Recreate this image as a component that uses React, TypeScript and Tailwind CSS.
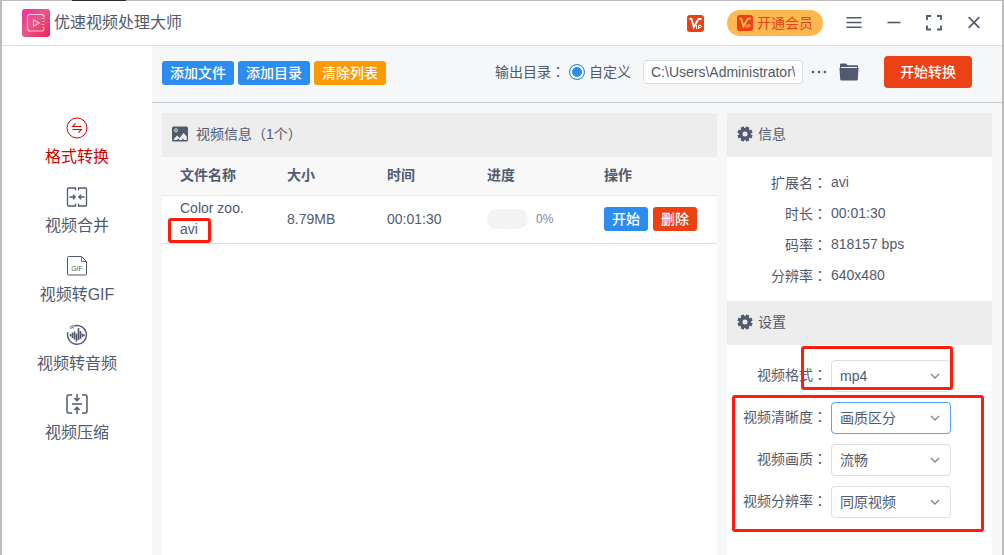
import { useState } from "react";
import { twJoin } from "tailwind-merge";

type IconProps = { className?: string };

const ConvertIcon = ({ className }: IconProps) => (
  <svg viewBox="0 0 22 22" fill="none" stroke="currentColor" className={className}>
    <circle cx="11" cy="11" r="10" strokeWidth="1" />
    <path d="M9.5 6.3 6.7 9.5H15.5M6.5 12.5H15.3L12.5 15.7" strokeWidth="1.1" />
  </svg>
);

const MergeIcon = ({ className }: IconProps) => (
  <svg viewBox="0 0 22 22" fill="none" stroke="currentColor" strokeWidth="1.3" className={className}>
    <path d="M9.5 4.5V2H2.5Q1.5 2 1.5 3V19Q1.5 20 2.5 20H9.5V17.5" />
    <path d="M12.5 4.5V2H19.5Q20.5 2 20.5 3V19Q20.5 20 19.5 20H12.5V17.5" />
    <path d="M3.5 11H9M7 8.8 9.2 11 7 13.2M18.5 11H13M15 8.8 12.8 11 15 13.2" />
  </svg>
);

const GifIcon = ({ className }: IconProps) => (
  <svg viewBox="0 0 22 22" fill="none" stroke="currentColor" className={className}>
    <path d="M15.5 1.5H2.5Q1.5 1.5 1.5 2.5V19Q1.5 20 2.5 20H19.5Q20.5 20 20.5 19V6.5Z" />
    <path d="M15.5 1.5V6.5H20.5M16 2 20 6" strokeWidth="0.9" />
    <text
      x="11"
      y="15.5"
      textAnchor="middle"
      fontSize="7"
      fontFamily="Liberation Sans, sans-serif"
      fill="currentColor"
      stroke="none"
    >
      GIF
    </text>
  </svg>
);

const AudioIcon = ({ className }: IconProps) => (
  <svg viewBox="0 0 22 22" fill="none" stroke="currentColor" className={className}>
    <path d="M8 2A9.4 9.4 0 1 1 2 8.2" strokeWidth="1.4" />
    <path d="M3.5 3.5 6.5 1.5 7.5 4.5M4 4.5 7 3.5" strokeWidth="0.8" />
    <path d="M4.5 10V12.5M6.5 8.5V14M8.5 7.5V15.5M10.5 9.5V17.5M12.5 4V16M14.5 7V15M16.5 9.5V13M18 10.5V12" strokeWidth="1.6" />
  </svg>
);

const CompressIcon = ({ className }: IconProps) => (
  <svg viewBox="0 0 22 22" fill="none" stroke="currentColor" strokeWidth="1.5" className={className}>
    <path d="M6 2H2.5Q1 2 1 3.5V18.5Q1 20 2.5 20H6M16 2H19.5Q21 2 21 3.5V18.5Q21 20 19.5 20H16" />
    <path d="M6 11H16M11 1V7.5M8.3 5 11 7.7 13.7 5M11 21V14.5M8.3 17 11 14.3 13.7 17" />
  </svg>
);

const VipIcon = ({ className, mark }: IconProps & { mark: string }) => (
  <svg viewBox="0 0 17 17" fill="none" stroke={mark} className={className}>
    <rect width="17" height="17" rx="3" fill="#ed4014" stroke="none" />
    <path d="M2.5 4H4.5L6.8 12 11.5 4H14.5" strokeWidth="1.9" />
    <path d="M9.5 10V14M11.5 14V10.3H13.2Q14.3 10.3 14.3 11.3T13.2 12.4H11.5" strokeWidth="1" />
  </svg>
);

const GearIcon = ({ className }: IconProps) => (
  <svg viewBox="0 0 16 16" fill="currentColor" className={className}>
    <circle cx="8" cy="8" r="4.2" fill="none" stroke="currentColor" strokeWidth="3.4" />
    {[22.5, 67.5, 112.5, 157.5].map((angle) => (
      <g key={angle} transform={`rotate(${angle} 8 8)`}>
        <rect x="6.2" y="0.4" width="3.6" height="2.6" rx="0.6" />
        <rect x="6.2" y="13" width="3.6" height="2.6" rx="0.6" />
      </g>
    ))}
  </svg>
);

const PictureIcon = ({ className }: IconProps) => (
  <svg viewBox="0 0 16 16" className={className}>
    <rect y="0.5" width="16" height="15" rx="1.5" fill="currentColor" />
    <circle cx="4" cy="4.3" r="1.5" fill="none" stroke="#ededed" />
    <path d="M1.2 13.8 5 9.6 7.6 12 11.6 7 14.8 10.6V14H12L11 12.5 9.8 14H7.5L6 12.6 4.8 14Z" fill="#ededed" />
  </svg>
);

const FolderIcon = ({ className }: IconProps) => (
  <svg viewBox="0 0 20 18" fill="currentColor" className={className}>
    <path d="M1 5V1.5Q1 0.5 2 0.5H7L8.5 2.2H18Q19 2.2 19 3.2V5H18V4H2V5Z" />
    <path d="M0.5 5H19.5L18.8 16.5Q18.7 17.5 17.7 17.5H2.3Q1.3 17.5 1.2 16.5Z" />
  </svg>
);

const LogoIcon = ({ className }: IconProps) => (
  <svg viewBox="0 0 28 28" fill="none" className={className}>
    <defs>
      <linearGradient id="logo" x1="0" y1="0" x2="1" y2="1">
        <stop offset="0" stopColor="#ec2fa6" />
        <stop offset="0.45" stopColor="#e9578a" />
        <stop offset="1" stopColor="#ee2452" />
      </linearGradient>
    </defs>
    <rect width="28" height="28" rx="3" fill="url(#logo)" />
    <g stroke="#fbc3d6">
      <path d="M22 8.5V8Q22 5.5 19.5 5.5H8Q5.5 5.5 5.5 8V19.5Q5.5 22 8 22H19.5Q22 22 22 19.5" strokeWidth="1.2" />
      <path d="M11.5 10.8V17.2L17 14Z" strokeWidth="1.1" />
      <path d="M19.5 9.5H22.5M20.5 12.5H22.5M19.5 15.5H22.5M20.5 18.5H22.5" />
    </g>
  </svg>
);

const menuItems = [
  { label: "格式转换", icon: ConvertIcon },
  { label: "视频合并", icon: MergeIcon },
  { label: "视频转GIF", icon: GifIcon },
  { label: "视频转音频", icon: AudioIcon },
  { label: "视频压缩", icon: CompressIcon },
];

const videoInfo = [
  { label: "扩展名", value: "avi" },
  { label: "时长", value: "00:01:30" },
  { label: "码率", value: "818157 bps" },
  { label: "分辨率", value: "640x480" },
];

const settings = [
  { id: "format", label: "视频格式", options: ["mp4", "avi", "mov"] },
  { id: "clarity", label: "视频清晰度", options: ["画质区分", "码率区分"], active: true },
  { id: "quality", label: "视频画质", options: ["流畅", "标清", "高清"] },
  { id: "resolution", label: "视频分辨率", options: ["同原视频", "1280x720"] },
];

// Full-width punctuation centred in its box
const Punct = ({ children }: { children: string }) => (
  <span className="font-['Noto_Sans_CJK_TC',sans-serif]">{children}</span>
);

const buttonColors = {
  primary: "bg-[#2d8cf0]",
  warning: "bg-[#ff9900]",
  error: "bg-[#ed4014]",
};

interface SmallButtonProps {
  color: keyof typeof buttonColors;
  children: string;
}

const SmallButton = ({ color, children }: SmallButtonProps) => (
  <button
    type="button"
    className={twJoin(
      "h-6 rounded-[3px] px-2 text-sm leading-6 font-medium text-white",
      buttonColors[color],
    )}
  >
    {children}
  </button>
);

const TitleBar = () => (
  <header className="flex h-[45px] items-center border-b border-[#dcdee2] bg-white pr-[18px] pl-5">
    <LogoIcon className="size-7" />
    <h1 className="ml-1 flex-1 text-base">优速视频处理大师</h1>
    <VipIcon mark="#fff" className="size-[17px]" />
    <button
      type="button"
      className="ml-[23px] flex h-[26px] items-center gap-1 rounded-full bg-[#ffb84f] px-2.5 text-sm text-[#ed4014]"
    >
      <VipIcon mark="#ffb84f" className="size-4" />
      开通会员
    </button>
    <div className="ml-[21px] flex gap-5">
      <button type="button" aria-label="菜单" className="size-5">
        <svg viewBox="0 0 20 20" stroke="currentColor" strokeWidth="1.5">
          <path d="M2.5 4.8H17.5M2.5 9.5H17.5M2.5 14.2H17.5" />
        </svg>
      </button>
      <button type="button" aria-label="最小化" className="size-5">
        <svg viewBox="0 0 20 20" stroke="currentColor" strokeWidth="1.6">
          <path d="M3.5 9.5H16.5" />
        </svg>
      </button>
      <button type="button" aria-label="最大化" className="size-5">
        <svg viewBox="0 0 20 20" fill="none" stroke="currentColor" strokeWidth="1.8">
          <path d="M3 7V3H7M13 3H17V7M17 12.5V16.5H13M7 16.5H3V12.5" />
        </svg>
      </button>
      <button type="button" aria-label="关闭" className="size-5">
        <svg viewBox="0 0 20 20" stroke="currentColor" strokeWidth="1.7">
          <path d="M4.7 4.2 15.3 14.8M15.3 4.2 4.7 14.8" />
        </svg>
      </button>
    </div>
  </header>
);

const Sidebar = () => {
  const [current, setCurrent] = useState(menuItems[0].label);

  return (
    <nav className="flex w-[150px] shrink-0 flex-col items-center gap-[17px] bg-white pt-[71px]">
      {menuItems.map(({ label, icon: Icon }) => (
        <button
          key={label}
          type="button"
          onClick={() => setCurrent(label)}
          className={twJoin(
            "flex flex-col items-center gap-1.5 text-base leading-6",
            current === label && "text-[#d40000]",
          )}
        >
          <Icon className="size-[22px]" />
          {label}
        </button>
      ))}
    </nav>
  );
};

const Toolbar = () => (
  <div className="flex h-[57px] items-center border-b border-[#c5c8ce] pr-[30px] pb-1 pl-2.5">
    <div className="flex flex-1 gap-1 pt-0.5">
      <SmallButton color="primary">添加文件</SmallButton>
      <SmallButton color="primary">添加目录</SmallButton>
      <SmallButton color="warning">清除列表</SmallButton>
    </div>
    <span>
      输出目录<Punct>：</Punct>
    </span>
    <label className="ml-1 flex items-center gap-1">
      <input
        type="radio"
        name="output"
        defaultChecked
        className="size-4 appearance-none rounded-full border border-[#2d8cf0] bg-white shadow-[inset_0_0_0_2px_white] checked:bg-[#2d8cf0]"
      />
      自定义
    </label>
    <input
      aria-label="输出目录"
      defaultValue="C:\Users\Administrator\"
      className="ml-3 h-6 w-40 rounded-[3px] border border-[#dcdee2] bg-white px-[7px] text-sm"
    />
    <button type="button" aria-label="更多" className="ml-2">
      <svg viewBox="0 0 16 16" fill="currentColor" className="size-4">
        <circle cx="2" cy="8" r="1.3" />
        <circle cx="8" cy="8" r="1.3" />
        <circle cx="14" cy="8" r="1.3" />
      </svg>
    </button>
    <button type="button" aria-label="打开文件夹" className="ml-3">
      <FolderIcon className="h-[18px] w-5" />
    </button>
    <button
      type="button"
      className="ml-[25px] h-8 rounded bg-[#ed4014] px-4 text-sm font-medium text-white"
    >
      开始转换
    </button>
  </div>
);

const FileTable = () => (
  <section className="flex-1 bg-white">
    <h2 className="flex h-11 items-center gap-2 bg-[#ededed] px-2.5 pb-0.5">
      <PictureIcon className="size-4" />
      <span>
        视频信息<Punct>（</Punct>1个<Punct>）</Punct>
      </span>
    </h2>
    <table className="w-full table-fixed text-left">
      <colgroup>
        <col className="w-[107px]" />
        <col className="w-[100px]" />
        <col className="w-[100px]" />
        <col className="w-[117px]" />
        <col />
      </colgroup>
      <thead>
        <tr className="h-[38px] border-b border-[#e8eaec] bg-[#f8f8f9]">
          {["文件名称", "大小", "时间", "进度", "操作"].map((title) => (
            <th key={title} className="pl-[18px] font-bold">
              {title}
            </th>
          ))}
        </tr>
      </thead>
      <tbody>
        <tr className="h-12 border-b border-[#dcdee2]">
          <td className="pl-[18px]">
            Color zoo.
            <br />
            <span className="relative">
              avi
              <span className="absolute -top-[3px] -left-3 h-[25px] w-[43px] rounded-[3px] border-3 border-[#ff1d0d]" />
            </span>
          </td>
          <td className="pl-[18px]">8.79MB</td>
          <td className="pl-[18px]">00:01:30</td>
          <td className="pl-[18px]">
            <div className="flex items-center gap-2 text-xs text-[#808695]">
              <div className="h-5 w-[41px] rounded-full bg-[#f3f3f3]" />
              0%
            </div>
          </td>
          <td className="pl-[18px]">
            <div className="flex gap-[5px]">
              <SmallButton color="primary">开始</SmallButton>
              <SmallButton color="error">删除</SmallButton>
            </div>
          </td>
        </tr>
      </tbody>
    </table>
  </section>
);

const PanelTitle = ({ children }: { children: string }) => (
  <h2 className="flex h-11 items-center gap-[5px] bg-[#ededed] px-2.5 pb-0.5">
    <GearIcon className="size-4" />
    {children}
  </h2>
);

const SidePanel = () => (
  <aside className="w-[265px] shrink-0 bg-white">
    <PanelTitle>信息</PanelTitle>
    <dl className="py-2.5">
      {videoInfo.map(({ label, value }) => (
        <div key={label} className="flex h-[31px] items-center gap-1">
          <dt className="w-[100px] text-right">
            {label}
            <Punct>：</Punct>
          </dt>
          <dd>{value}</dd>
        </div>
      ))}
    </dl>
    <PanelTitle>设置</PanelTitle>
    <div className="relative flex flex-col gap-2.5 pt-[15px]">
      {settings.map(({ id, label, options, active }) => (
        <div key={id} className="flex items-center gap-1">
          <label htmlFor={id} className="w-[100px] pb-0.5 text-right">
            {label}
            <Punct>：</Punct>
          </label>
          <div className="relative">
            <select
              id={id}
              className={twJoin(
                "block h-8 w-[120px] appearance-none rounded border bg-white px-2 text-sm",
                active ? "border-[#57a3f3]" : "border-[#dcdee2]",
              )}
            >
              {options.map((option) => (
                <option key={option}>{option}</option>
              ))}
            </select>
            <svg
              viewBox="0 0 10 10"
              fill="none"
              stroke="#808695"
              strokeWidth="1.4"
              className="pointer-events-none absolute top-[11px] right-[11px] size-2.5"
            >
              <path d="M1 3 5 7 9 3" />
            </svg>
          </div>
        </div>
      ))}
      <div className="pointer-events-none absolute top-px left-[74px] h-11 w-[152px] rounded-[3px] border-3 border-[#ff1d0d]" />
      <div className="pointer-events-none absolute top-[50px] left-[5px] h-[137px] w-[252px] rounded-[3px] border-3 border-[#ff1d0d]" />
    </div>
  </aside>
);

const App = () => (
  <div className="flex min-h-screen flex-col bg-[#bcbcbc] font-['Liberation_Sans','Noto_Sans_CJK_SC',sans-serif] text-sm leading-[21px] text-[#515a6e]">
    {/* edge of the window behind */}
    <div className="h-px pl-[72px]">
      <div className="h-px w-[54px] bg-[#2b2729]" />
    </div>
    <div className="flex flex-1 flex-col border-x-2 border-[#bcbcbc] bg-[#f5f7f9]">
      <TitleBar />
      <div className="flex flex-1">
        <Sidebar />
        <main className="flex flex-1 flex-col">
          <Toolbar />
          <div className="flex flex-1 gap-2.5 px-2.5 pt-2.5">
            <FileTable />
            <SidePanel />
          </div>
        </main>
      </div>
    </div>
  </div>
);

export default App;
